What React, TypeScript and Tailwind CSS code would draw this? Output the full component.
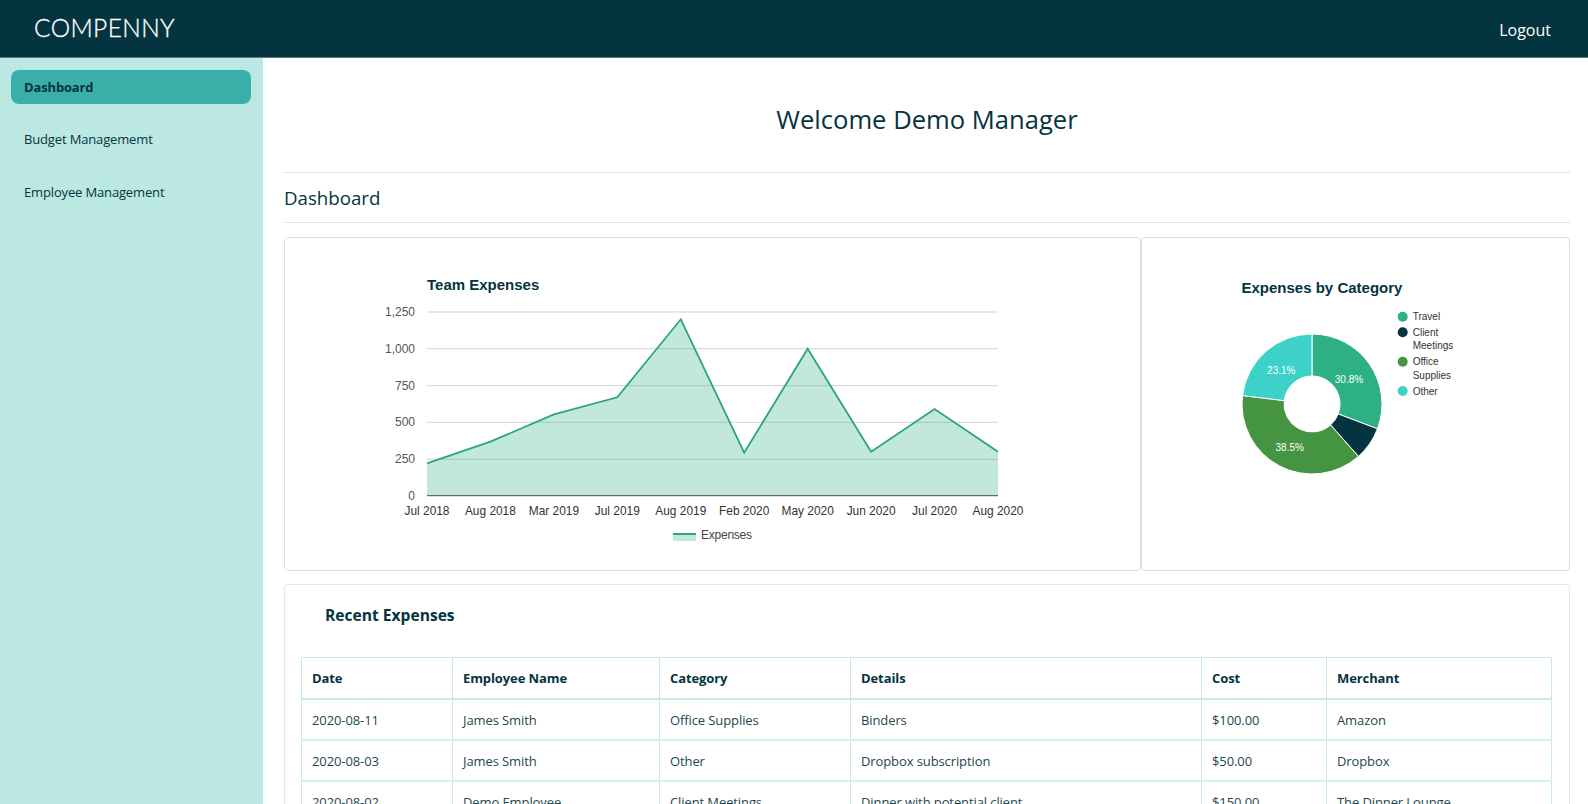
const ink = "#04343f";

const linePts: [number, number][] = [
  [427, 463.3], [490.4, 441.7], [553.9, 414.3], [617.3, 397.3], [680.8, 319.3],
  [744.2, 452.7], [807.7, 348.7], [871.1, 451.7], [934.6, 409], [998, 451.7],
];
const xLabels = ["Jul 2018", "Aug 2018", "Mar 2019", "Jul 2019", "Aug 2019", "Feb 2020", "May 2020", "Jun 2020", "Jul 2020", "Aug 2020"];
const yTicks: [string, number][] = [["1,250", 312], ["1,000", 348.7], ["750", 385.7], ["500", 422.3], ["250", 459.3]];

function TeamChart() {
  const ox = 285, oy = 238;
  const pts = linePts.map(([x, y]) => `${x - ox},${y - oy}`).join(" ");
  return (
    <svg width="855" height="332" viewBox="0 0 855 332" className="block" style={{ fontFamily: '"Liberation Sans", Arial, sans-serif' }}>
      <text x={427 - ox} y={52} fontSize="15" fontWeight="700" fill={ink}>Team Expenses</text>
      {yTicks.map(([l, y]) => (
        <g key={l}>
          <line x1={427 - ox} x2={998 - ox} y1={y - oy} y2={y - oy} stroke="#d2d2d2" strokeWidth="1" />
          <text x={415 - ox} y={y - oy + 4} fontSize="12" textAnchor="end" fill="#555555">{l}</text>
        </g>
      ))}
      <polygon points={`${427 - ox},${495.5 - oy} ${pts} ${998 - ox},${495.5 - oy}`} fill="#2eb086" fillOpacity="0.29" />
      <polyline points={pts} fill="none" stroke="#2aa57e" strokeWidth="1.8" />
      <line x1={427 - ox} x2={998 - ox} y1={495.7 - oy} y2={495.7 - oy} stroke="#4a4a4a" strokeWidth="1" />
      <text x={415 - ox} y={500 - oy} fontSize="12" textAnchor="end" fill="#555555">0</text>
      {xLabels.map((l, i) => (
        <text key={l} x={linePts[i][0] - ox} y={514.5 - oy} fontSize="11.9" textAnchor="middle" fill="#333333">{l}</text>
      ))}
      <rect x={673 - ox} y={534 - oy} width="23" height="7" fill="#2eb086" fillOpacity="0.29" />
      <line x1={673 - ox} x2={696 - ox} y1={534 - oy} y2={534 - oy} stroke="#2aa57e" strokeWidth="2" />
      <text x={701 - ox} y={539 - oy} fontSize="12" fill="#444444" textLength="51">Expenses</text>
    </svg>
  );
}

function arc(cx: number, cy: number, r: number, R: number, a0: number, a1: number) {
  const p = (rad: number, a: number) => `${cx + rad * Math.sin(a)},${cy - rad * Math.cos(a)}`;
  const large = a1 - a0 > Math.PI ? 1 : 0;
  return `M${p(R, a0)} A${R},${R} 0 ${large} 1 ${p(R, a1)} L${p(r, a1)} A${r},${r} 0 ${large} 0 ${p(r, a0)} Z`;
}

const slices = [
  { v: 4 / 13, c: "#2eb086" },
  { v: 1 / 13, c: "#04343f" },
  { v: 5 / 13, c: "#459441" },
  { v: 3 / 13, c: "#3dd1c9" },
];

function PieChart() {
  const cx = 100, cy = 166, R = 70, r = 28;
  let acc = 0;
  return (
    <svg width="427" height="332" viewBox="0 0 427 332" className="block" style={{ fontFamily: '"Liberation Sans", Arial, sans-serif' }}>
      <g transform="translate(70 0)">
        <text x={29.5} y={55} fontSize="15" fontWeight="700" fill={ink}>Expenses by Category</text>
        <g>
          {slices.map((s) => {
            const a0 = acc * 2 * Math.PI;
            acc += s.v;
            const a1 = acc * 2 * Math.PI;
            return <path key={s.c} d={arc(cx, cy, r, R, a0, a1)} fill={s.c} stroke="#ffffff" strokeWidth="1" />;
          })}
        </g>
        <text x={137} y={145} fontSize="10" fill="#ffffff" textAnchor="middle">30.8%</text>
        <text x={77.7} y={212.5} fontSize="10" fill="#ffffff" textAnchor="middle">38.5%</text>
        <text x={69.3} y={135.5} fontSize="10" fill="#ffffff" textAnchor="middle">23.1%</text>
        <circle cx={190.7} cy={78.7} r={5} fill="#2eb086" />
        <text x={200.7} y={82.3} fontSize="10" fill="#333333">Travel</text>
        <circle cx={190.7} cy={94.3} r={5} fill="#04343f" />
        <text x={200.7} y={98} fontSize="10" fill="#333333">Client</text>
        <text x={200.7} y={111.4} fontSize="10" fill="#333333">Meetings</text>
        <circle cx={190.7} cy={123.7} r={5} fill="#459441" />
        <text x={200.7} y={127.3} fontSize="10" fill="#333333">Office</text>
        <text x={200.7} y={140.7} fontSize="10" fill="#333333">Supplies</text>
        <circle cx={190.7} cy={153} r={5} fill="#3dd1c9" />
        <text x={200.7} y={156.7} fontSize="10" fill="#333333">Other</text>
      </g>
    </svg>
  );
}

const rows = [
  ["2020-08-11", "James Smith", "Office Supplies", "Binders", "$100.00", "Amazon"],
  ["2020-08-03", "James Smith", "Other", "Dropbox subscription", "$50.00", "Dropbox"],
  ["2020-08-02", "Demo Employee", "Client Meetings", "Dinner with potential client", "$150.00", "The Dinner Lounge"],
];
const heads = ["Date", "Employee Name", "Category", "Details", "Cost", "Merchant"];
const widths = ["w-[151px]", "w-[207px]", "w-[191px]", "w-[351px]", "w-[125px]", "w-[225px]"];

export default function App() {
  return (
    <div className="h-screen overflow-hidden flex flex-col bg-white text-[14px] text-[#04343f]" style={{ fontFamily: '"Open Sans", "Noto Sans", sans-serif' }}>
      <header className="h-[58px] shrink-0 bg-[#04343f] border-b border-[#5d7b80] flex items-center justify-between pl-[34px] pr-[37px]">
        <span className="text-white text-[24.5px] font-light tracking-[0.4px] leading-none [-webkit-text-stroke:0.3px_white]" style={{ fontFamily: 'Lato, sans-serif' }}>COMPENNY</span>
        <span className="text-white text-[16px] mt-[2px]">Logout</span>
      </header>
      <div className="flex flex-1 min-h-0">
        <aside className="w-[263px] shrink-0 bg-[#bce8e4] pl-[11px] pr-[12px] pt-[12px] text-[13px] tracking-[-0.15px]">
          <div className="h-[34px] rounded-lg bg-[#3aafa9] flex items-center px-[13px] pt-[2px] font-bold">Dashboard</div>
          <div className="h-[34px] mt-[18px] flex items-center px-[13px] pt-[2px]">Budget Managememt</div>
          <div className="h-[34px] mt-[18px] flex items-center px-[13px] pt-[3px]">Employee Management</div>
        </aside>
        <main className="flex-1 min-w-0 pl-[21px] pr-[18px]">
          <div className="h-[115px] flex items-center justify-center border-b border-[#e3e6e8] pt-[10px]">
            <h1 className="text-[25.6px]">Welcome Demo Manager</h1>
          </div>
          <div className="h-[50px] flex items-center border-b border-[#e3e6e8] pt-[2px]">
            <h2 className="text-[18.7px]">Dashboard</h2>
          </div>
          <div className="flex mt-[14px]">
            <section className="w-[857px] h-[334px] border border-[#dcdfe1] rounded-[4px]"><TeamChart /></section>
            <section className="flex-1 h-[334px] border border-[#dcdfe1] rounded-[4px]"><PieChart /></section>
          </div>
          <section className="mt-[13px] border border-[#e3e6e8] rounded-[4px] pb-4 px-[16px] h-[300px]">
            <h3 className="text-[15.6px] font-bold pl-[24px] pt-[18px] leading-[24px]">Recent Expenses</h3>
            <table className="mt-[30px] w-[1250px] table-fixed border-collapse text-[13px] tracking-[-0.1px]">
              <colgroup>{widths.map((w) => <col key={w} className={w} />)}</colgroup>
              <thead>
                <tr className="h-[41px]">
                  {heads.map((h) => <th key={h} className="border border-b-2 border-[#c8eae7] px-[10px] pt-[2px] text-left font-bold">{h}</th>)}
                </tr>
              </thead>
              <tbody>
                {rows.map((r) => (
                  <tr key={r[0]} className="h-[41px]">
                    {r.map((c, i) => <td key={i} className="border-x border-y-2 border-x-[#c8eae7] border-y-[#d6f0ed] px-[10px] pt-[4px] text-[#1e4750]">{c}</td>)}
                  </tr>
                ))}
              </tbody>
            </table>
          </section>
        </main>
      </div>
    </div>
  );
}
